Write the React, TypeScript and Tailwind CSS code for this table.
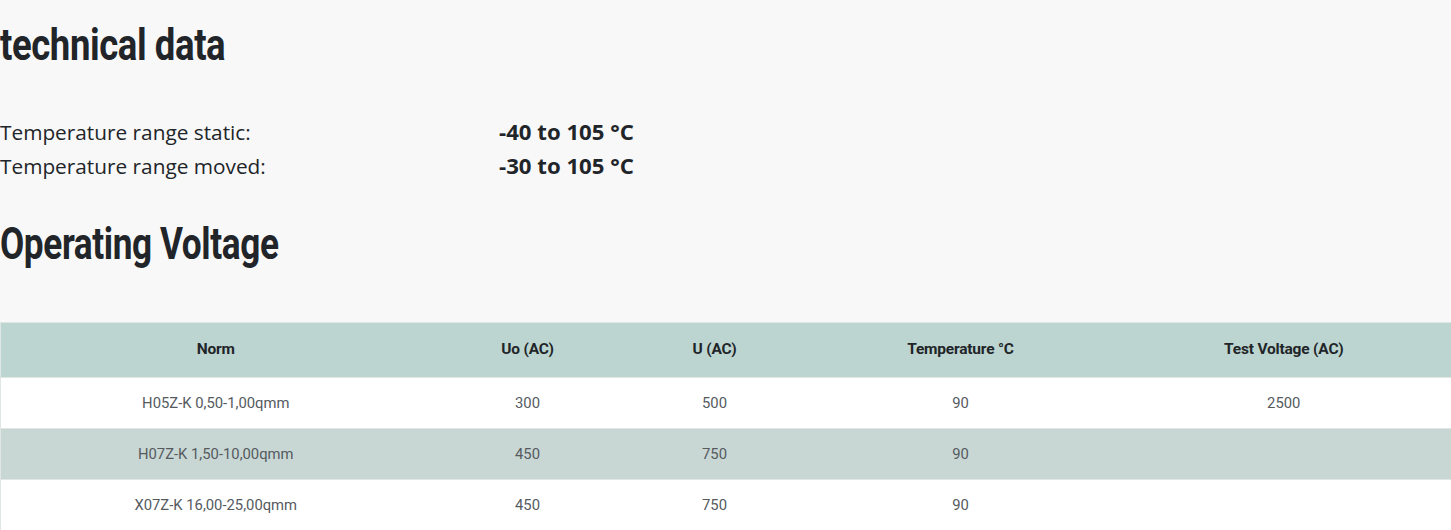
const rows = [
  { norm: "H05Z-K 0,50-1,00qmm", uo: "300", u: "500", t: "90", tv: "2500" },
  { norm: "H07Z-K 1,50-10,00qmm", uo: "450", u: "750", t: "90", tv: "" },
  { norm: "X07Z-K 16,00-25,00qmm", uo: "450", u: "750", t: "90", tv: "" },
];

function Heading({ children, narrow }: { children: React.ReactNode; narrow?: boolean }) {
  return (
    <h2
      className={
        "font-['Roboto',sans-serif] text-[44px] font-bold leading-[52px] tracking-[-0.5px] text-[#212529] origin-left whitespace-nowrap " +
        (narrow ? "scale-x-[0.8]" : "scale-x-[0.83]")
      }
    >
      {children}
    </h2>
  );
}

export default function App() {
  return (
    <div className="min-h-[530px] w-[1451px] bg-[#f8f8f8]">
      <div className="pt-[19px]">
        <Heading>technical data</Heading>
      </div>
      <div className="mt-[44px] font-['Open_Sans',sans-serif] text-[20.8px] leading-[33px] text-[#212529]">
        <div className="flex items-baseline">
          <span className="w-[499px]">Temperature range static:</span>
          <span className="text-[22.2px] font-bold">-40 to 105 °C</span>
        </div>
        <div className="flex items-baseline">
          <span className="w-[499px]">Temperature range moved:</span>
          <span className="text-[22.2px] font-bold">-30 to 105 °C</span>
        </div>
      </div>
      <div className="mt-[35px]">
        <Heading narrow>Operating Voltage</Heading>
      </div>
      <table className="mt-[52px] w-[1451px] table-fixed border-collapse font-['Roboto',sans-serif] text-[14.8px]">
        <colgroup>
          <col className="w-[430px]" />
          <col className="w-[194px]" />
          <col className="w-[180px]" />
          <col className="w-[312px]" />
          <col className="w-[335px]" />
        </colgroup>
        <thead>
          <tr className="h-[55px] border border-[#dfe6e4] bg-[#bdd5d0] text-[#212529]">
            <th className="text-[15.5px] font-bold tracking-[-0.2px]">Norm</th>
            <th className="text-[15.5px] font-bold tracking-[-0.2px]">Uo (AC)</th>
            <th className="text-[15.5px] font-bold tracking-[-0.2px]">U (AC)</th>
            <th className="text-[15.5px] font-bold tracking-[-0.2px]">Temperature °C</th>
            <th className="text-[15.5px] font-bold tracking-[-0.2px]">Test Voltage (AC)</th>
          </tr>
        </thead>
        <tbody>
          {rows.map((r, i) => (
            <tr
              key={r.norm}
              className={
                "h-[51px] border border-[#dfe6e4] text-center text-[#555a5f] " +
                (i % 2 === 1 ? "bg-[#c8d7d4]" : "bg-white")
              }
            >
              <td>{r.norm}</td>
              <td>{r.uo}</td>
              <td>{r.u}</td>
              <td>{r.t}</td>
              <td>{r.tv}</td>
            </tr>
          ))}
        </tbody>
      </table>
    </div>
  );
}
